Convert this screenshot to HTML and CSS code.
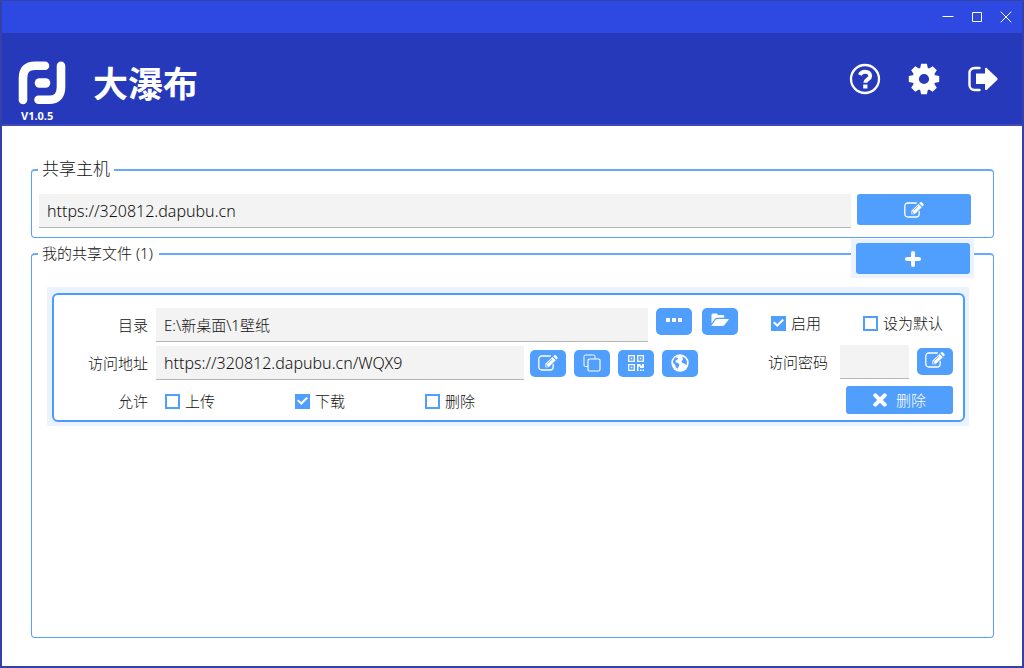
FILE: index.html
```html
<!DOCTYPE html>
<html lang="zh-CN">
<head>
<meta charset="utf-8">
<title>大瀑布</title>
<link rel="stylesheet" href="styles.css">
</head>
<body>
<svg class="sprite" aria-hidden="true">
  <symbol id="i-edit" viewBox="0 0 20 16">
    <path d="M15.2 9.500V12a3 3 0 0 1-3 3H3.800a3 3 0 0 1-3-3V4a3 3 0 0 1 3-3h8.500" fill="none" stroke="currentColor" stroke-width="1.300" stroke-linecap="round"/>
    <path d="M7.300 12.200V8.800L14.500 1.900l3.300 3.300-7.200 7z" fill="currentColor"/>
    <path d="M15.200 1.200l.9-.8c.5-.5 1.200-.5 1.700 0l1.600 1.500c.5.500.5 1.200 0 1.700l-.9.9z" fill="currentColor"/>
    <path d="M9.300 8.800l4.800-4.700M8.300 9.400v1.900h1.900" fill="none" stroke="#509fff" stroke-width=".8"/>
  </symbol>
  <symbol id="i-copy" viewBox="0 0 18 18">
    <path d="M5 12.500H2.500a1.500 1.500 0 0 1-1.500-1.500V2.500A1.500 1.500 0 0 1 2.500 1h8A1.500 1.500 0 0 1 12 2.500V5" fill="none" stroke="currentColor"/>
    <rect x="5" y="5" width="12" height="12" rx="1.500" fill="none" stroke="currentColor" stroke-width="1.200"/>
  </symbol>
  <symbol id="i-qr" viewBox="0 0 16 16">
    <g fill="none" stroke="currentColor" stroke-width="1.300"><path d="M.7.7h5.600v5.600H.7zM9.700.7h5.600v5.600H9.700zM.7 9.700h5.600v5.600H.7z"/></g>
    <path d="M2.800 2.800h1.500v1.500H2.800zM11.800 2.800h1.500v1.500h-1.500zM2.800 11.800h1.500v1.500H2.800zM9 9h3.500v1.500h1.500V9h2v4h-4v-1.500h-1.500V16H9zM12 14.500h1.500V16H12zM14.500 14.500H16V16h-1.500z" fill="currentColor"/>
  </symbol>
  <symbol id="i-globe" viewBox="0 0 18 18">
    <circle cx="9" cy="9" r="8.700" fill="currentColor"/>
    <path d="M7.600 1.900 5 3.600 7.200 4.200 6.400 5.600 4.700 6.600 4.500 8.200l2.500.7 1.500 1.600-.8 2-1.300 2.400-1.700-2-.5-2.200-1.900-1.500L2 7.200C2.600 4.500 4.800 2.500 7.600 1.900zM11.200 2.600l3 1.600 1.800 3.300-.4 3.800-1.700-1.600-2.500-.6-.9-1.900 1.500-1.800z" fill="#509fff"/>
  </symbol>
  <symbol id="i-folder" viewBox="0 0 18 14">
    <path d="M.5 10.500V2A1.500 1.500 0 0 1 2 .5h3.300c.8 0 1.300.6 1.300 1.400h5.200c.8 0 1.400.6 1.400 1.400v1.400H6.300c-.9 0-1.700.4-2.300 1.100z" fill="currentColor"/>
    <path d="M6.200 5.900h10.800c.7 0 .8.500.4 1l-4 5c-.5.600-1.200 1-2 1H1.200c-.8 0-.9-.5-.4-1l3.700-5c.4-.6 1-1 1.700-1z" fill="currentColor"/>
  </symbol>
  <symbol id="i-more" viewBox="0 0 16 4">
    <path d="M.5 0H4v4H.5A.5.5 0 0 1 0 3.500v-3A.5.5 0 0 1 .5 0zM6 0h4v4H6zM12 0h3.500a.5.5 0 0 1 .5.500v3a.5.5 0 0 1-.5.500H12z" fill="currentColor"/>
  </symbol>
  <symbol id="i-plus" viewBox="0 0 16 16">
    <path d="M8 2v12M2 8h12" stroke="currentColor" stroke-width="4" stroke-linecap="round"/>
  </symbol>
  <symbol id="i-times" viewBox="0 0 14 14">
    <path d="M2.300 2.300l9.400 9.400M11.700 2.300l-9.400 9.400" stroke="currentColor" stroke-width="4" stroke-linecap="round"/>
  </symbol>
  <symbol id="i-help" viewBox="0 0 32 32">
    <circle cx="16" cy="16" r="14" fill="none" stroke="currentColor" stroke-width="2.300"/>
    <path d="M10.900 12c.9-2.200 2.600-3.300 5.100-3.300 2.900 0 5.200 1.700 5.200 4.200 0 3.500-4.900 3.400-4.900 6.800" fill="none" stroke="currentColor" stroke-width="4"/>
    <path d="M14.200 21.500h4.200v4h-4.200z" fill="currentColor"/>
  </symbol>
  <symbol id="i-gear" viewBox="-16 -16 32 32">
    <circle r="8.300" fill="none" stroke="currentColor" stroke-width="6.400"/>
    <g fill="currentColor">
      <path id="tooth" d="M-4-10-2.900-15.200h5.800L4-10z"/>
      <use href="#tooth" transform="rotate(45)"/><use href="#tooth" transform="rotate(90)"/>
      <use href="#tooth" transform="rotate(135)"/><use href="#tooth" transform="rotate(180)"/>
      <use href="#tooth" transform="rotate(225)"/><use href="#tooth" transform="rotate(270)"/>
      <use href="#tooth" transform="rotate(315)"/>
    </g>
  </symbol>
  <symbol id="i-exit" viewBox="0 0 32 32">
    <path d="M12.500 5H7.500a5 5 0 0 0-5 5v12a5 5 0 0 0 5 5h5" fill="none" stroke="currentColor" stroke-width="2.400" stroke-linecap="round"/>
    <path d="M9 10.500h9V6c0-1.200 1.100-1.500 1.900-.7l10.300 9.800c.5.500.5 1.300 0 1.800l-10.300 9.800c-.8.800-1.900.5-1.900-.7v-5H9z" fill="currentColor"/>
  </symbol>
</svg>

<div class="window">
  <div class="titlebar">
    <button class="win-btn" aria-label="最小化"><svg viewBox="0 0 12 12"><path d="M.5 5.500h11"/></svg></button>
    <button class="win-btn" aria-label="最大化"><svg viewBox="0 0 12 12"><path d="M1.500 1.500h9v9h-9z"/></svg></button>
    <button class="win-btn" aria-label="关闭"><svg viewBox="0 0 12 12"><path d="M.7.700l10.600 10.600M11.300.700.7 11.300"/></svg></button>
  </div>

  <header class="header">
    <div class="brand">
      <svg class="logo" viewBox="0 0 48 44" aria-hidden="true">
        <g fill="none" stroke="#fff" stroke-width="8.600" stroke-linecap="round">
          <path d="M5 39V17Q5 4.700 17 4.700H27"/>
          <path d="M43 4.700V26Q43 38.800 31 38.800H20.500"/>
          <path d="M21.500 22H27.500" stroke-width="9.600"/>
        </g>
      </svg>
      <span class="version">V1.0.5</span>
    </div>
    <h1 class="title">大瀑布</h1>
    <nav class="tools">
      <button class="tool" aria-label="帮助"><svg><use href="#i-help"/></svg></button>
      <button class="tool" aria-label="设置"><svg><use href="#i-gear"/></svg></button>
      <button class="tool" aria-label="退出"><svg><use href="#i-exit"/></svg></button>
    </nav>
  </header>

  <main class="main">
    <fieldset class="group host">
      <legend class="legend-large">共享主机</legend>
      <div class="host-row">
        <input class="field" type="text" value="https://320812.dapubu.cn" aria-label="共享主机">
        <button class="btn btn-wide" aria-label="编辑共享主机"><svg class="ic-edit"><use href="#i-edit"/></svg></button>
      </div>
    </fieldset>

    <fieldset class="group shares">
      <legend>我的共享文件 (1)</legend>
      <div class="add-halo">
        <button class="btn btn-wide" aria-label="添加"><svg class="ic-16"><use href="#i-plus"/></svg></button>
      </div>

      <div class="card-halo">
        <div class="card">
          <label class="name" for="dir">目录</label>
          <div class="line line-top">
            <input class="field mixed" id="dir" type="text" value="E:\新桌面\1壁纸">
            <div class="btns">
              <button class="btn btn-icon" aria-label="选择目录"><svg class="ic-more"><use href="#i-more"/></svg></button>
              <button class="btn btn-icon" aria-label="打开目录"><svg class="ic-folder"><use href="#i-folder"/></svg></button>
            </div>
          </div>
          <div class="side side-checks">
            <label class="check"><input type="checkbox" checked>启用</label>
            <label class="check"><input type="checkbox">设为默认</label>
          </div>

          <label class="name" for="url">访问地址</label>
          <div class="line line-url">
            <input class="field" id="url" type="text" value="https://320812.dapubu.cn/WQX9">
            <div class="btns">
              <button class="btn btn-icon" aria-label="编辑地址"><svg class="ic-edit"><use href="#i-edit"/></svg></button>
              <button class="btn btn-icon" aria-label="复制地址"><svg class="ic-18"><use href="#i-copy"/></svg></button>
              <button class="btn btn-icon" aria-label="二维码"><svg class="ic-16"><use href="#i-qr"/></svg></button>
              <button class="btn btn-icon" aria-label="浏览器打开"><svg class="ic-18"><use href="#i-globe"/></svg></button>
            </div>
          </div>
          <div class="side side-pass">
            <label for="pass">访问密码</label>
            <input class="field" id="pass" type="text">
            <button class="btn btn-icon" aria-label="编辑密码"><svg class="ic-edit"><use href="#i-edit"/></svg></button>
          </div>

          <span class="name">允许</span>
          <div class="line permits">
            <label class="check"><input type="checkbox">上传</label>
            <label class="check"><input type="checkbox" checked>下载</label>
            <label class="check"><input type="checkbox">删除</label>
          </div>
          <div class="side side-end">
            <button class="btn btn-delete"><svg class="ic-14"><use href="#i-times"/></svg>删除</button>
          </div>
        </div>
      </div>
    </fieldset>
  </main>
</div>
</body>
</html>
```
FILE: styles.css
```css
* { box-sizing: border-box; }

body {
  margin: 0;
  color: #111;
  background: #fff;
  font: 300 15px/20px "Noto Sans", "Noto Sans CJK SC", sans-serif;
}

button, input { font: inherit; color: inherit; margin: 0; }
button { border: 0; padding: 0; background: none; cursor: pointer; }
svg { display: block; }
.sprite { position: absolute; width: 0; height: 0; }

.window {
  display: flex;
  flex-direction: column;
  min-height: 100vh;
  border: 2px solid #3341a8;
  border-top-width: 1px;
}

.titlebar {
  display: flex;
  align-items: center;
  justify-content: flex-end;
  gap: 17px;
  height: 32px;
  padding-right: 10px;
  background: #2e48e2;
}
.win-btn svg {
  width: 12px;
  height: 12px;
  fill: none;
  stroke: #fff;
  stroke-width: 1;
}

.header {
  display: flex;
  align-items: center;
  height: 93px;
  padding: 0 23px 0 16px;
  color: #fff;
  background: #2539ba;
  border-bottom: 2px solid #3d4cb8;
}
.brand { padding-top: 28px; height: 100%; }
.logo { width: 48px; height: 44px; }
.version { display: block; padding-left: 3px; font-size: 11px; line-height: 22px; font-weight: 700; }
.title {
  margin: 0 auto 0 27px;
  padding-top: 6px;
  font: 700 35px/44px "Noto Sans CJK SC", sans-serif;
}
.tools { display: flex; gap: 27px; }
.tool svg { width: 32px; height: 32px; }

.main {
  display: flex;
  flex: 1;
  flex-direction: column;
  gap: 6px;
  padding: 33px 28px 28px 29px;
}

.group {
  position: relative;
  min-width: 0;
  margin: 0;
  padding: 0;
  border: 1px solid #5a9fff;
  border-top-width: 2px;
  border-top-color: #69a8ff;
  border-radius: 4px;
}
.group legend {
  margin-left: 6px;
  padding: 0 6px 2px 4px;
  line-height: 18px;
}
.group .legend-large { padding: 0 4px 2px; font-size: 17px; line-height: 20px; }

.host { height: 79px; }
.host-row { display: flex; gap: 6px; padding: 13px 22px 0 7px; }
.shares { flex: 1; }

.field {
  flex: 1;
  min-width: 0;
  height: 34px;
  padding: 0 8px;
  border: 0;
  border-bottom: 1px solid #b5b5b5;
  background: #f3f3f3;
  font-size: 16px;
}
.field.mixed { font-size: 15px; }

.btn {
  display: flex;
  align-items: center;
  justify-content: center;
  color: #fff;
  background: #509fff;
}
.btn-wide { width: 114px; height: 31px; border-radius: 3px; }
.btn-icon { width: 36px; height: 27px; border-radius: 5px; }
.btn-delete { gap: 9px; width: 107px; height: 28px; border-radius: 3px; }

.add-halo {
  position: absolute;
  top: -25px;
  right: 19px;
  padding: 4px 4px 4px 5px;
  background: #eaf3ff;
}

.card-halo { margin: 23px 24px 0 15px; padding: 6px 4px 4px 5px; background: #eaf3ff; }
.card {
  display: grid;
  grid-template-columns: 80px 1fr 185px;
  grid-auto-rows: 34px;
  gap: 4px 8px;
  align-items: center;
  padding: 13px 10px 2px 14px;
  border: 2px solid #4a9cff;
  border-radius: 6px;
  background: #fff;
}
.name { text-align: right; }
.line { display: flex; align-items: center; }
.line-top { gap: 8px; margin-right: 22px; align-items: flex-start; }
.line-url { gap: 6px; margin-right: 62px; }
.btns { display: flex; gap: 8px; }
.line-top .btns { gap: 10px; }
.line-top .btn-icon, .side-pass .btn-icon { padding-bottom: 3px; }

.side { display: flex; align-items: center; }
.side-checks { justify-content: space-between; padding: 0 10px 4px 3px; }
.side-pass { gap: 8px; padding-bottom: 3px; }
.side-pass label { margin-right: 4px; }
.side-end { justify-content: flex-end; padding-bottom: 3px; }

.permits { padding-left: 9px; gap: 80px; }
.check { display: flex; align-items: center; gap: 5px; }
.check input {
  appearance: none;
  display: grid;
  place-items: center;
  width: 15px;
  height: 15px;
  border: 2px solid #509fff;
  background: #fff;
}
.check input:checked { background: #509fff; }
.check input:checked::before {
  content: "";
  width: 11px;
  height: 9px;
  background: #fff;
  clip-path: polygon(0 50%, 13% 34%, 38% 62%, 86% 6%, 100% 20%, 39% 94%);
}

.ic-edit { width: 20px; height: 16px; }
.ic-16 { width: 16px; height: 16px; }
.ic-18 { width: 18px; height: 18px; }
.ic-14 { width: 14px; height: 14px; }
.ic-more { width: 16px; height: 4px; }
.ic-folder { width: 18px; height: 14px; }
```
